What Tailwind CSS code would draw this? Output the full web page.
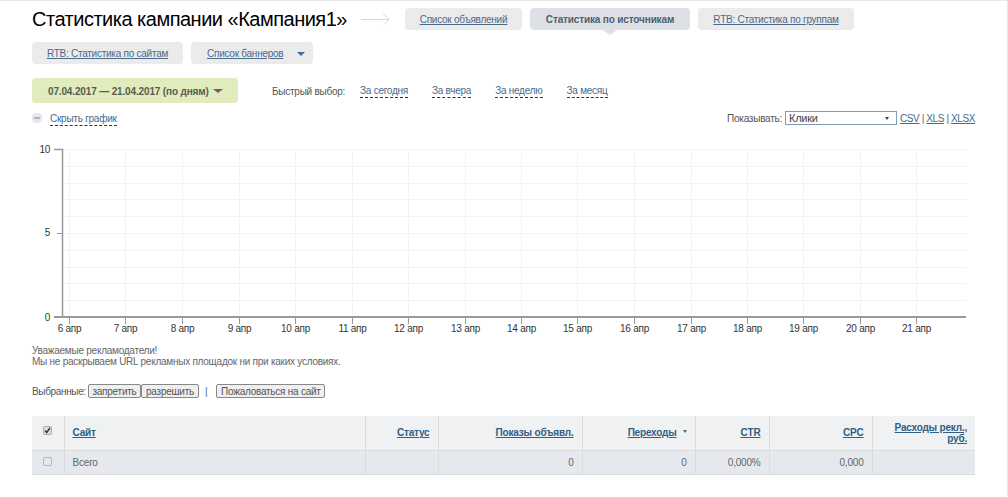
<!DOCTYPE html>
<html lang="ru">
<head>
  <meta charset="UTF-8">
  <title>Статистика кампании</title>
  <script src="https://cdn.jsdelivr.net/npm/@tailwindcss/browser@4"></script>
</head>
<body class="bg-white font-['Liberation_Sans',Arial,sans-serif] text-[10px] tracking-[-0.25px] leading-[11px] text-[#555] overflow-hidden">
  <div class="h-[497px] border-t border-[#e8e8e8] border-r pl-8 pr-[32px] relative">

    <!-- Заголовок и вкладки -->
    <div class="flex items-start h-[31px] pt-[7px]">
      <h1 class="text-[20px] tracking-[-0.5px] leading-[24px] text-black w-[314px] whitespace-nowrap mt-[-1px]">Статистика кампании «Кампания1»</h1>
      <svg class="ml-[15px] mt-[5px]" width="29" height="12" viewBox="0 0 29 12" fill="none" stroke="#d8d8d8" stroke-width="1"><path d="M0 6.5h28M22 .5l6 6-6 6"/></svg>
      <a class="ml-[15px] h-[22px] w-[117px] bg-[#ebebeb] rounded-sm flex items-center justify-center text-[#4a6a8a] underline">Список объявлений</a>
      <div class="relative ml-2 h-[22px] w-[160px] bg-[#dde1e5] rounded-sm flex items-center justify-center font-bold tracking-[-0.15px] text-[#4f5f6f]">
        Статистика по источникам
        <span class="absolute left-[73px] top-[22px] border-x-[7px] border-x-transparent border-t-[5px] border-t-[#dde1e5]"></span>
      </div>
      <a class="ml-2 h-[22px] w-[156px] bg-[#ebebeb] rounded-sm flex items-center justify-center text-[#4a6a8a] underline">RTB: Статистика по группам</a>
    </div>

    <div class="flex gap-2 mt-[10px] h-[22px]">
      <a class="w-[151px] bg-[#ebebeb] rounded-sm flex items-center justify-center text-[#4a6a8a] underline">RTB: Статистика по сайтам</a>
      <a class="w-[122px] bg-[#ebebeb] rounded-sm flex items-center text-[#4a6a8a] pl-4">
        <span class="underline w-[90px]">Список баннеров</span>
        <span class="mt-[2px] border-x-[4px] border-x-transparent border-t-[4px] border-t-[#3f6b99]"></span>
      </a>
    </div>

    <!-- Период -->
    <div class="flex items-center mt-[14px] h-[25px]">
      <div class="w-[206px] h-[25px] bg-[#e0ecbb] rounded-sm flex items-center pl-4 pt-[1px] font-bold text-[#5b5b50] tracking-[-0.15px] whitespace-nowrap">
        <span class="w-[165px]">07.04.2017 — 21.04.2017 (по дням)</span>
        <span class="border-x-[5px] border-x-transparent border-t-[4px] border-t-[#666]"></span>
      </div>
      <span class="ml-[34px] w-[88px] mt-[2px]">Быстрый выбор:</span>
      <a class="mt-[2px] border-b border-dashed border-[#333] text-[#4a6a8a] mr-6 leading-[12px]">За сегодня</a>
      <a class="mt-[2px] border-b border-dashed border-[#333] text-[#4a6a8a] mr-6 leading-[12px]">За вчера</a>
      <a class="mt-[2px] border-b border-dashed border-[#333] text-[#4a6a8a] mr-6 leading-[12px]">За неделю</a>
      <a class="mt-[2px] border-b border-dashed border-[#333] text-[#4a6a8a] leading-[12px]">За месяц</a>
    </div>

    <!-- Управление графиком -->
    <div class="flex items-center mt-2 h-[14px] relative">
      <span class="w-[10px] h-[10px] bg-[#e4e8ec] rounded-sm flex items-center justify-center"><span class="w-[6px] h-[2px] bg-[#aab2ba]"></span></span>
      <a class="ml-2 mt-[2px] border-b border-dashed border-[#333] text-[#4a6a8a] leading-[12px]">Скрыть график</a>
      <div class="ml-auto flex items-center">
        <span class="mr-[3px]">Показывать:</span>
        <div class="w-[112px] h-[14px] border border-[#7f9db9] flex items-center justify-between pl-[3px] pr-[7px] text-[11px] text-[#444]">
          Клики
          <span class="border-x-[2.5px] border-x-transparent border-t-[3px] border-t-[#444]"></span>
        </div>
        <span class="ml-[3px] tracking-[-0.4px] text-[#4a6a8a]"><a class="underline">CSV</a> | <a class="underline">XLS</a> | <a class="underline">XLSX</a></span>
      </div>
    </div>

    <!-- График -->
    <svg id="chart" class="block mt-[15px] -ml-8" width="1000" height="198" viewBox="0 140 1000 198"></svg>

    <p class="mt-[7px] text-[#666]">Уважаемые рекламодатели!<br>Мы не раскрываем URL рекламных площадок ни при каких условиях.</p>

    <!-- Действия -->
    <div class="flex items-center mt-[17px] h-[14px]">
      <span class="w-[53px] tracking-[-0.35px]">Выбранные:</span>
      <button class="ml-[3px] w-[53px] h-[14px] bg-[#efefef] border border-[#888] rounded-[2px] text-[#555]">запретить</button>
      <button class="w-[58px] h-[14px] bg-[#efefef] border border-[#888] rounded-[2px] text-[#555]">разрешить</button>
      <span class="ml-[6px] text-[#4a6a8a]">|</span>
      <button class="ml-[9px] w-[109px] h-[14px] bg-[#efefef] border border-[#888] rounded-[2px] text-[#555]">Пожаловаться на сайт</button>
    </div>

    <!-- Таблица -->
    <table class="mt-[18px] w-[943px] table-fixed border-collapse tracking-[-0.2px]">
      <colgroup>
        <col class="w-[32px]"><col class="w-[301px]"><col class="w-[73px]"><col class="w-[144px]"><col class="w-[113px]"><col class="w-[74px]"><col class="w-[103px]"><col class="w-[103px]">
      </colgroup>
      <thead>
        <tr class="h-[34px] bg-[#f0f1f3] border-b border-[#dcdcdc] text-[#2f5f85] font-bold">
          <th class="border-r border-[#dcdcdc] pb-[4px]">
            <span class="mx-auto w-[9px] h-[9px] rounded-[2px] border border-[#aaa] bg-[#dedede] flex items-center justify-center">
              <svg width="7" height="7" viewBox="0 0 7 7" fill="none" stroke="#333" stroke-width="1.4"><path d="M1 3.5l1.7 2L6 .8"/></svg>
            </span>
          </th>
          <th class="border-r border-[#dcdcdc] text-left pl-2"><a class="underline">Сайт</a></th>
          <th class="border-r border-[#dcdcdc] text-right pr-2"><a class="underline">Статус</a></th>
          <th class="border-r border-[#dcdcdc] text-right pr-2"><a class="underline">Показы объявл.</a></th>
          <th class="border-r border-[#dcdcdc] text-right pr-2 whitespace-nowrap"><a class="underline">Переходы</a><span class="inline-block ml-[6px] mb-[3px] border-x-[2.5px] border-x-transparent border-t-[3px] border-t-[#666]"></span></th>
          <th class="border-r border-[#dcdcdc] text-right pr-2"><a class="underline">CTR</a></th>
          <th class="border-r border-[#dcdcdc] text-right pr-2"><a class="underline">CPC</a></th>
          <th class="text-right pr-2 leading-[11px]"><a class="underline">Расходы рекл., руб.</a></th>
        </tr>
      </thead>
      <tbody>
        <tr class="h-[24px] bg-[#e5e9ed] border-b border-[#dcdcdc] text-[#666]">
          <td class="border-r border-[#dcdcdc]"><span class="block mx-auto mb-[1px] w-[9px] h-[9px] rounded-[2px] border border-[#b5b5b5] bg-[#e8e8e8]"></span></td>
          <td class="border-r border-[#dcdcdc] pl-2">Всего</td>
          <td class="border-r border-[#dcdcdc]"></td>
          <td class="border-r border-[#dcdcdc] text-right pr-2">0</td>
          <td class="border-r border-[#dcdcdc] text-right pr-2">0</td>
          <td class="border-r border-[#dcdcdc] text-right pr-2">0,000%</td>
          <td class="border-r border-[#dcdcdc] text-right pr-2">0,000</td>
          <td></td>
        </tr>
      </tbody>
    </table>
  </div>

  <script>
    // Рисуем сетку и оси графика
    const svg = document.getElementById('chart');
    const ns = 'http://www.w3.org/2000/svg';
    function add(tag, attrs, text) {
      const el = document.createElementNS(ns, tag);
      for (const k in attrs) el.setAttribute(k, attrs[k]);
      if (text) el.textContent = text;
      svg.appendChild(el);
    }
    const days = [69.5, 125.5, 182.5, 239.5, 295.5, 352.5, 408.5, 465.5, 521.5, 577.5, 634.5, 691.5, 747.5, 803.5, 860.5, 916.5];
    for (let i = 0; i < 10; i++) {
      const y = Math.round(149 + i * 16.8) + 0.5;
      add('line', {x1: 62, x2: 966, y1: y, y2: y, stroke: '#f3f3f3'});
    }
    days.forEach((x, i) => {
      add('line', {x1: x, x2: x, y1: 149, y2: 317, stroke: '#f3f3f3'});
      add('line', {x1: x, x2: x, y1: 317, y2: 324, stroke: '#999'});
      add('text', {x: x, y: 332, 'text-anchor': 'middle', 'font-size': 10, fill: '#333'}, (i + 6) + ' апр');
    });
    add('path', {d: 'M54 149.5h8.5V317.5', fill: 'none', stroke: '#999', 'stroke-width': 1.5});
    add('path', {d: 'M54 317h912', fill: 'none', stroke: '#999', 'stroke-width': 2});
    add('line', {x1: 57, x2: 62, y1: 233.5, y2: 233.5, stroke: '#999'});
    add('text', {x: 50, y: 153, 'text-anchor': 'end', 'font-size': 10, fill: '#333'}, '10');
    add('text', {x: 50, y: 236, 'text-anchor': 'end', 'font-size': 10, fill: '#333'}, '5');
    add('text', {x: 50, y: 321, 'text-anchor': 'end', 'font-size': 10, fill: '#333'}, '0');
  </script>
</body>
</html>
